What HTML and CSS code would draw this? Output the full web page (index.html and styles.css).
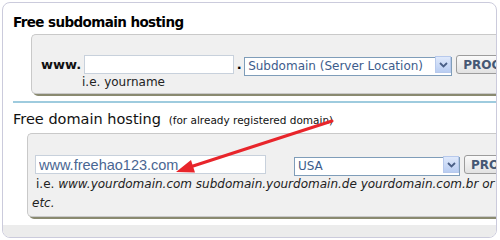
FILE: index.html
```html
<!DOCTYPE html>
<html lang="en">
<head>
    <meta charset="UTF-8">
    <title>Free hosting</title>
    <link rel="stylesheet" href="styles.css">
</head>
<body>
    <div class="card">
        <div class="section">
            <h2 class="title-bold">Free subdomain hosting</h2>
            <div class="panel panel-sub">
                <div class="row">
                    <span class="www">www.</span>
                    <input type="text" class="field field-sub" value="">
                    <span class="dot">.</span>
                    <div class="select-wrap select-sub">
                        <select><option>Subdomain (Server Location)</option></select>
                        <span class="arrow"><svg width="9" height="6" viewBox="0 0 9 6"><path d="M1 1 L4.5 4.5 L8 1" fill="none" stroke="#4a5f86" stroke-width="1.8"/></svg></span>
                    </div>
                    <button class="go">PROCEED</button>
                </div>
                <div class="hint hint-sub">i.e. yourname</div>
            </div>
        </div>

        <div class="divider"></div>

        <div class="section">
            <h2 class="title-plain">Free domain hosting <small>(for already registered domain)</small></h2>
            <div class="panel panel-dom">
                <div class="row">
                    <input type="text" class="field field-dom" value="www.freehao123.com">
                    <div class="select-wrap select-dom">
                        <select><option>USA</option></select>
                        <span class="arrow"><svg width="9" height="6" viewBox="0 0 9 6"><path d="M1 1 L4.5 4.5 L8 1" fill="none" stroke="#4a5f86" stroke-width="1.8"/></svg></span>
                    </div>
                    <button class="go">PROCEED</button>
                </div>
                <div class="hint hint-dom">i.e. <em>www.yourdomain.com subdomain.yourdomain.de yourdomain.com.br or etc.</em></div>
            </div>
        </div>

        <div class="footer"></div>
    </div>

    <!-- red pointer drawn over the form -->
    <svg class="pointer" width="500" height="240" viewBox="0 0 500 240">
        <line x1="332" y1="121" x2="190" y2="167" stroke="#e8252b" stroke-width="3" stroke-linecap="round"/>
        <polygon points="176,172 195,172.5 191,160" fill="#e8252b"/>
    </svg>
</body>
</html>
```

FILE: styles.css
```css
body {
    margin: 0;
    width: 500px;
    height: 240px;
    position: relative;
    overflow: hidden;
    background: #fff;
    font-family: "DejaVu Sans", Verdana, sans-serif;
}

.card {
    margin: 2px;
    width: 493px;
    height: 234px;
    border: 1px solid #cbcbdc;
    border-radius: 8px;
    overflow: hidden;
    display: flex;
    flex-direction: column;
    background: #fff;
}

.section {
    padding: 0 0 0 10px;
}

h2 {
    margin: 0;
    color: #000;
}

.title-bold {
    font-size: 13.5px;
    font-weight: bold;
    letter-spacing: -0.6px;
    padding-top: 11px;
    height: 20px;
}

.title-plain {
    font-size: 14.5px;
    font-weight: normal;
    padding-top: 8px;
    height: 22px;
    color: #111;
}

.title-plain small {
    font-size: 10.5px;
    margin-left: 3px;
}

.panel {
    background: #f0f0f0;
    border: 1px solid #c9c9c9;
    border-right: none;
    border-radius: 5px 0 0 5px;
    box-shadow: 2px 2px 0 #8a8a70;
    width: 560px;
}

.panel-sub {
    margin-left: 18px;
    padding: 20px 0 3px 9px;
}

.panel-dom {
    margin-left: 14px;
    padding: 21px 0 3px 7px;
}

.row {
    display: flex;
    align-items: center;
}

.www {
    font-size: 13px;
    font-weight: bold;
    color: #111;
    margin-right: 3px;
}

.dot {
    font-size: 13px;
    font-weight: bold;
    width: 10px;
    text-align: center;
}

.field {
    box-sizing: border-box;
    height: 19px;
    border: 1px solid #c8d1dc;
    background: #fff;
    padding: 0 3px;
    margin: 0;
    font-family: "Liberation Sans", Arial, sans-serif;
    font-size: 14.5px;
    color: #4a6692;
    outline: none;
}

.field-sub {
    width: 150px;
}

.field-dom {
    width: 231px;
    margin-right: 28px;
}

.select-wrap {
    position: relative;
    height: 19px;
}

.select-wrap select {
    appearance: none;
    -webkit-appearance: none;
    box-sizing: border-box;
    height: 19px;
    width: 100%;
    margin: 0;
    border: 1px solid #7f9db9;
    border-radius: 0;
    background: #fff;
    padding: 0 0 0 3px;
    font-family: "DejaVu Sans", Verdana, sans-serif;
    font-size: 12px;
    color: #3d5c8c;
}

.select-sub {
    width: 208px;
}

.select-dom {
    width: 166px;
}

.arrow {
    position: absolute;
    right: 1px;
    top: 1px;
    width: 16px;
    height: 17px;
    background: linear-gradient(#dfe9fb, #b9cdf2);
    border: 1px solid #b7c9ec;
    box-sizing: border-box;
    display: flex;
    align-items: center;
    justify-content: center;
}

.go {
    margin-left: 4px;
    height: 19px;
    padding: 0 6px;
    border: 1px solid #9c9c9c;
    border-radius: 3px;
    background: linear-gradient(#fafafa, #e2e2e2);
    font-family: "DejaVu Sans", Verdana, sans-serif;
    font-size: 12px;
    font-weight: bold;
    color: #465874;
    white-space: nowrap;
}

.hint {
    font-size: 12px;
    color: #222;
}

.hint-sub {
    margin-left: 41px;
    line-height: 16px;
}

.hint-dom {
    width: 472px;
    line-height: 19px;
    margin-top: 1px;
    margin-left: -3px;
    text-indent: 4px;
}

.hint-dom em {
    font-style: oblique;
}

.divider {
    height: 2px;
    background: #9ecbde;
    margin: 7px 0 0 10px;
}

.footer {
    margin-top: auto;
    height: 12px;
    background: #ececec;
}

.pointer {
    position: absolute;
    left: 0;
    top: 0;
    pointer-events: none;
}
```
